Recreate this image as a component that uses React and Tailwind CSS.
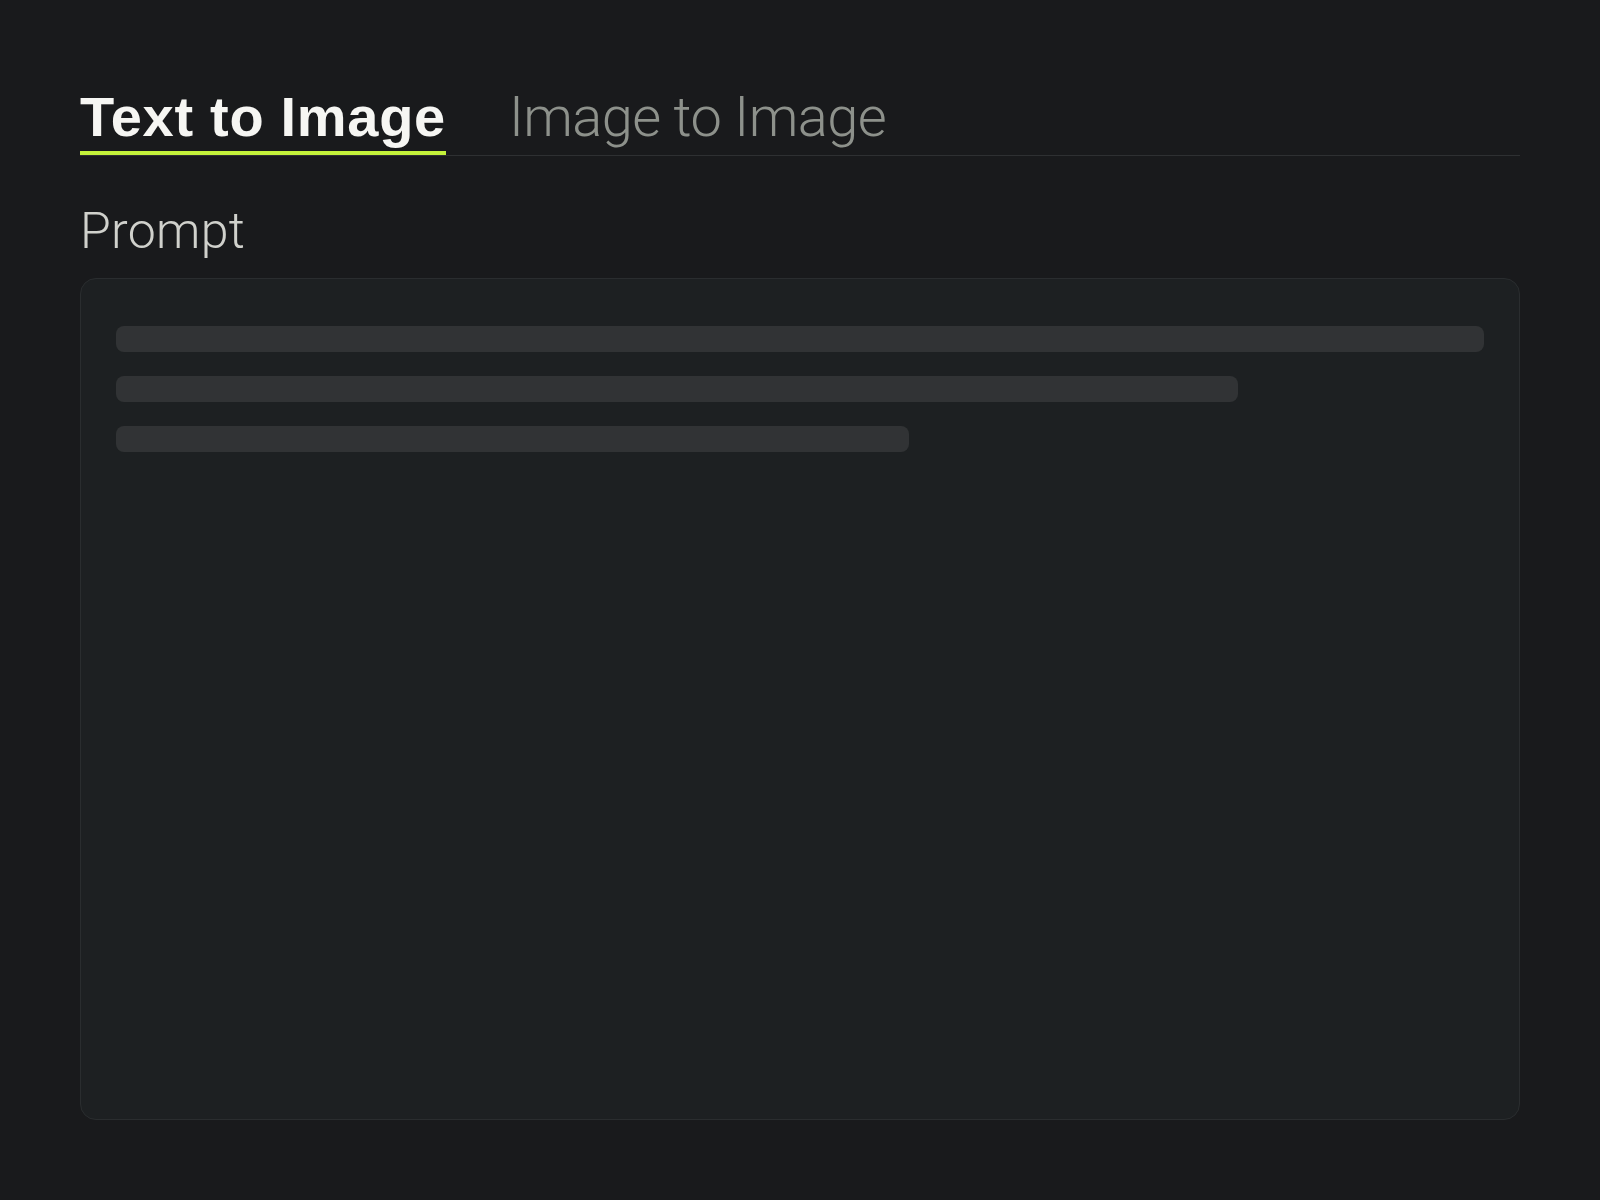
export default function App() {
  return (
    <div className="min-h-[1200px] w-full bg-[#191a1c] px-20 pt-[89px]" style={{ fontFamily: '"Liberation Sans", Arial, sans-serif' }}>
      <div className="flex gap-[63px] border-b border-[#2e3032]">
        <div className="border-b-4 border-[#c4f23a] pb-[6px] text-[56px] font-bold leading-[56px] tracking-[0.7px] text-[#f6f6f3]">
          Text to Image
        </div>
        <div
          className="border-b-4 border-transparent pb-[6px] text-[56px] font-light leading-[56px] tracking-[-0.6px] text-[#8d918b]"
          style={{ fontFamily: 'Roboto, "Liberation Sans", sans-serif' }}
        >
          Image to Image
        </div>
      </div>
      <div
        className="mt-[50px] text-[50px] font-light leading-[50px] tracking-[0.3px] text-[#d0d1cc]"
        style={{ fontFamily: 'Roboto, "Liberation Sans", sans-serif' }}
      >
        Prompt
      </div>
      <div className="mt-[22px] h-[842px] rounded-2xl border border-[#2a2d2f] bg-[#1d2022] px-[35px] pt-[47px]">
        <div className="flex flex-col gap-6">
          <div className="h-[26px] w-full rounded-lg bg-[#313335]" />
          <div className="h-[26px] w-[82%] rounded-lg bg-[#313335]" />
          <div className="h-[26px] w-[58%] rounded-lg bg-[#313335]" />
        </div>
      </div>
    </div>
  );
}
